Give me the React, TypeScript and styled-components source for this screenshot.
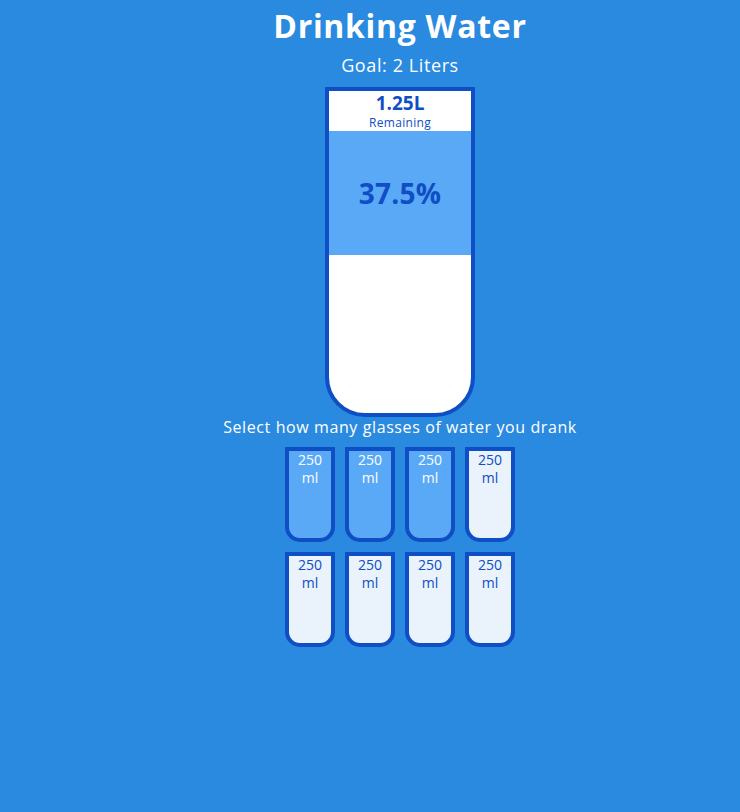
import React from "react";
import styled, { createGlobalStyle } from "styled-components";

const Global = createGlobalStyle`
  * { box-sizing: border-box; }
  html, body { margin: 0; padding: 0; }
  body {
    background: #2a8ae0;
    color: #fff;
    font-family: "Open Sans", "Liberation Sans", sans-serif;
    min-height: 812px;
  }
`;

const Page = styled.div`
  display: flex;
  flex-direction: column;
  align-items: center;
  padding-left: 60px;
  min-height: 812px;
`;

const Title = styled.h1`
  margin: 6px 0 0;
  font-size: 32px;
  font-weight: 700;
  line-height: 40px;
  letter-spacing: 0.7px;
`;

const Goal = styled.h3`
  margin: 7px 0 10px;
  font-size: 18px;
  font-weight: 400;
  line-height: 24px;
  letter-spacing: 0.6px;
`;

const BigCup = styled.div`
  width: 150px;
  height: 330px;
  background: #fff;
  border: 4px solid #0f4ec4;
  border-radius: 0 0 40px 40px;
  color: #0f4ec4;
  display: flex;
  flex-direction: column;
  overflow: hidden;
`;

const Remained = styled.div`
  display: flex;
  flex-direction: column;
  align-items: center;
  gap: 2px;
  text-align: center;
  padding-top: 2px;
  height: 40px;
`;

const Liters = styled.span`
  font-size: 19px;
  font-weight: 700;
  line-height: 20px;
`;

const Small = styled.small`
  font-size: 12px;
  line-height: 15px;
  letter-spacing: 0.3px;
`;

const Percentage = styled.div`
  background: #5aa9f6;
  display: flex;
  align-items: center;
  justify-content: center;
  font-weight: 700;
  font-size: 28px;
  letter-spacing: 0.3px;
`;

const Hint = styled.p`
  margin: 0 0 5px;
  font-size: 16px;
  line-height: 20px;
  letter-spacing: 0.6px;
`;

const Cups = styled.div`
  display: flex;
  flex-wrap: wrap;
  justify-content: center;
  width: 280px;
`;

const SmallCup = styled.div<{ $full: boolean }>`
  width: 50px;
  height: 95px;
  margin: 5px;
  border: 4px solid #0f4ec4;
  border-radius: 0 0 15px 15px;
  background: ${(p) => (p.$full ? "#5aa9f6" : "#eaf3fc")};
  color: ${(p) => (p.$full ? "#fff" : "#0f4ec4")};
  font-size: 14px;
  line-height: 18px;
  text-align: center;
`;

export default function App() {
  const total = 8;
  const full = 3;
  return (
    <>
      <Global />
      <Page>
        <Title>Drinking Water</Title>
        <Goal>Goal: 2 Liters</Goal>
        <BigCup>
          <Remained>
            <Liters>1.25L</Liters>
            <Small>Remaining</Small>
          </Remained>
          <Percentage style={{ height: `${(full / total) * 330}px` }}>
            37.5%
          </Percentage>
        </BigCup>
        <Hint>Select how many glasses of water you drank</Hint>
        <Cups>
          {Array.from({ length: total }).map((_, i) => (
            <SmallCup key={i} $full={i < full}>
              250
              <br />
              ml
            </SmallCup>
          ))}
        </Cups>
      </Page>
    </>
  );
}
